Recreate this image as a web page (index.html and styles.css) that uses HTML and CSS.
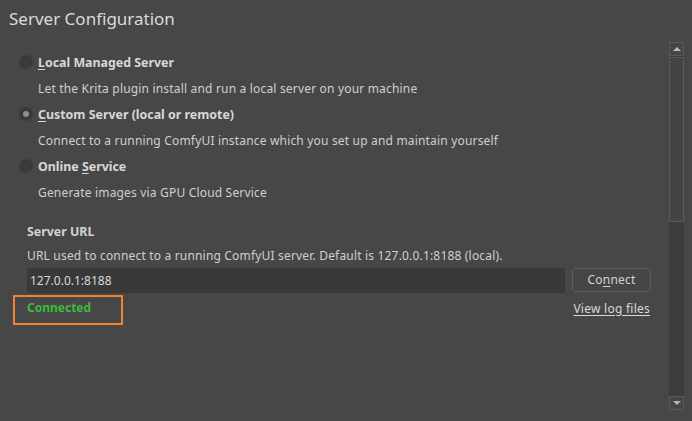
FILE: index.html
```html
<!DOCTYPE html>
<html>
<head>
<meta charset="utf-8">
<link rel="stylesheet" href="styles.css">
</head>
<body>
<div class="page">
  <h1 class="title">Server Configuration</h1>
  <div class="main">
    <div class="content">
      <div class="option">
        <span class="radio"></span>
        <span class="label"><u>L</u>ocal Managed Server</span>
      </div>
      <div class="desc">Let the Krita plugin install and run a local server on your machine</div>
      <div class="option">
        <span class="radio checked"></span>
        <span class="label"><u>C</u>ustom Server (local or remote)</span>
      </div>
      <div class="desc">Connect to a running ComfyUI instance which you set up and maintain yourself</div>
      <div class="option">
        <span class="radio"></span>
        <span class="label">Online <u>S</u>ervice</span>
      </div>
      <div class="desc">Generate images via GPU Cloud Service</div>

      <div class="url-section">
        <div class="section-title">Server URL</div>
        <div class="section-desc">URL used to connect to a running ComfyUI server. Default is 127.0.0.1:8188 (local).</div>
        <div class="url-row">
          <div class="input">127.0.0.1:8188</div>
          <div class="button">Co<u>n</u>nect</div>
        </div>
        <div class="status-row">
          <div class="status">Connected</div>
          <a class="link">View log files</a>
        </div>
      </div>
    </div>
    <div class="scrollbar">
      <div class="arrow up"><span></span></div>
      <div class="track">
        <div class="thumb"></div>
      </div>
      <div class="arrow down"><span></span></div>
    </div>
  </div>
</div>
</body>
</html>
```
FILE: styles.css
```css
html, body {
  margin: 0;
  padding: 0;
}
body {
  background: #474747;
  font-family: "Noto Sans", "Open Sans", sans-serif;
  color: #d6d6d6;
  width: 692px;
  height: 421px;
  overflow: hidden;
}
.page {
  display: flex;
  flex-direction: column;
  height: 421px;
}
.title {
  margin: 0;
  padding: 6px 0 0 9px;
  height: 36px;
  box-sizing: border-box;
  font-size: 17px;
  font-weight: normal;
  color: #dadada;
  line-height: 26px;
}
.main {
  display: flex;
  flex: 1;
  padding-bottom: 11px;
}
.content {
  flex: 1;
  padding: 13px 0 0 19px;
}
.option {
  display: flex;
  align-items: center;
  height: 26px;
}
.radio {
  width: 14px;
  height: 14px;
  border-radius: 50%;
  background: #3a3a3a;
  margin-right: 5px;
  display: flex;
  align-items: center;
  justify-content: center;
}
.radio.checked::after {
  content: "";
  width: 6px;
  height: 6px;
  border-radius: 50%;
  background: #8e8e8e;
}
.label {
  font-size: 12.4px;
  font-weight: bold;
  color: #d8d8d8;
}
u {
  text-decoration-thickness: 1px;
  text-underline-offset: 2px;
}
.desc {
  height: 26px;
  line-height: 27px;
  padding-left: 19px;
  font-size: 12px;
  letter-spacing: 0.18px;
  color: #cfcfcf;
}
.url-section {
  padding: 15px 0 0 8px;
  width: 624px;
}
.section-title {
  font-size: 12.4px;
  font-weight: bold;
  color: #d2d2d2;
  height: 24px;
  line-height: 24px;
}
.section-desc {
  font-size: 12px;
  letter-spacing: 0.18px;
  color: #cfcfcf;
  height: 24px;
  line-height: 24px;
}
.url-row {
  display: flex;
  gap: 7px;
  height: 25px;
}
.input {
  flex: 1;
  background: #393939;
  border-radius: 3px;
  font-size: 12px;
  line-height: 25px;
  padding-left: 3px;
  color: #d8d8d8;
}
.button {
  width: 79px;
  box-sizing: border-box;
  border: 1px solid #5c5c5c;
  border-radius: 3px;
  background: #464646;
  text-align: center;
  font-size: 12px;
  letter-spacing: 0.2px;
  line-height: 22px;
  color: #d2d2d2;
  height: 24px;
}
.status-row {
  display: flex;
  justify-content: space-between;
  align-items: center;
  height: 30px;
}
.status {
  position: relative;
  font-size: 12px;
  font-weight: bold;
  color: #3dbb3d;
  line-height: 30px;
}
.status::before {
  content: "";
  position: absolute;
  left: -14px;
  top: 2px;
  width: 106px;
  height: 26px;
  border: 2px solid #f5802d;
}
.link {
  font-size: 12px;
  letter-spacing: 0.25px;
  color: #d8d8d8;
  text-decoration: underline;
  text-underline-offset: 2px;
  margin-right: 1px;
}
.scrollbar {
  width: 15px;
  margin: 6px 8px 0 0;
  display: flex;
  flex-direction: column;
  background: #3d3d3d;
}
.arrow {
  height: 14px;
  box-sizing: border-box;
  border: 1px solid #595959;
  background: #464646;
  display: flex;
  align-items: center;
  justify-content: center;
}
.arrow span {
  width: 0;
  height: 0;
  border-left: 4px solid transparent;
  border-right: 4px solid transparent;
}
.arrow.up span {
  border-bottom: 4px solid #b8b8b8;
}
.arrow.down span {
  border-top: 4px solid #b8b8b8;
}
.track {
  flex: 1;
  padding-top: 1px;
}
.thumb {
  height: 165px;
  box-sizing: border-box;
  border: 1px solid #5a5a5a;
  background: #444444;
}
```
